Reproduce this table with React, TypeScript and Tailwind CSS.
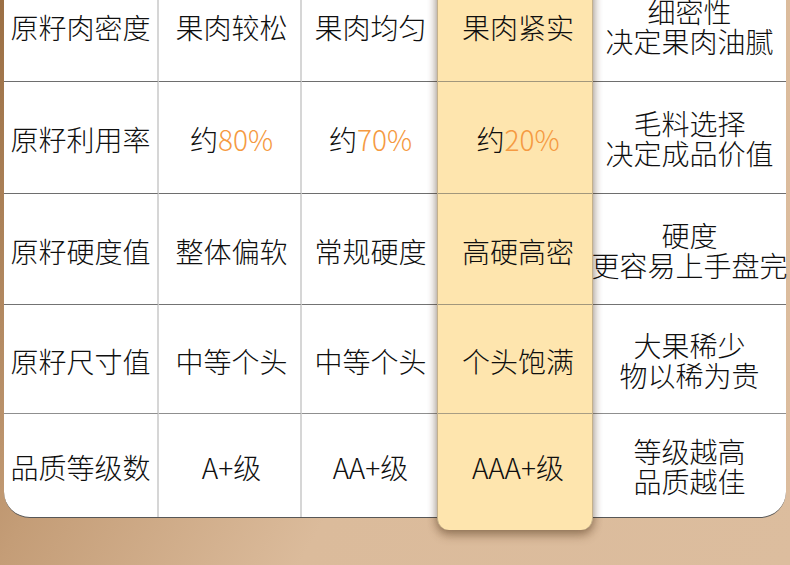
import React from "react";

type Row = {
  label: string;
  a: React.ReactNode;
  b: React.ReactNode;
  c: React.ReactNode;
  d: string[];
  h: string;
  line: string;
  hline: string;
};

const Pct = ({ v }: { v: string }) => (
  <span>
    约<span className="text-[#f59a42]">{v}</span>
  </span>
);

const rows: Row[] = [
  { label: "原籽肉密度", a: "果肉较松", b: "果肉均匀", c: "果肉紧实", d: ["细密性", "决定果肉油腻"], h: "h-[112px]", line: "border-b border-[#6e6e6e]", hline: "border-b border-[#a2977c]" },
  { label: "原籽利用率", a: <Pct v="80%" />, b: <Pct v="70%" />, c: <Pct v="20%" />, d: ["毛料选择", "决定成品价值"], h: "h-[112px]", line: "border-b border-[#6e6e6e]", hline: "border-b border-[#a2977c]" },
  { label: "原籽硬度值", a: "整体偏软", b: "常规硬度", c: "高硬高密", d: ["硬度", "更容易上手盘完"], h: "h-[111px]", line: "border-b border-[#737373]", hline: "border-b border-[#a2977c]" },
  { label: "原籽尺寸值", a: "中等个头", b: "中等个头", c: "个头饱满", d: ["大果稀少", "物以稀为贵"], h: "h-[109px]", line: "border-b border-[#8f8f8f]", hline: "border-b border-[#a89d84]" },
  { label: "品质等级数", a: "A+级", b: "AA+级", c: "AAA+级", d: ["等级越高", "品质越佳"], h: "h-[103px]", line: "", hline: "" },
];

export default function App() {
  return (
    <div className="h-[565px] w-[790px] overflow-hidden bg-[linear-gradient(120deg,#9b6f44_0%,#c49d77_29%,#dbbb9b_56%,#dcbd9e_100%)] font-['Noto_Sans_CJK_SC','Noto_Sans',sans-serif] text-[28px] leading-[30px] font-light text-[#0f0f0f]">
      <div className="-mt-[30px] ml-[4px] flex h-[548px] w-[782px] items-start rounded-b-[26px] border-b border-[#575757] bg-white">
        {/* column 1 */}
        <div className="flex w-[155px] flex-col">
          {rows.map((r, i) => (
            <div key={i} className={`flex items-center justify-center border-r-2 border-r-[#d6d6d6] pt-[3px] ${r.h} ${r.line}`}>
              {r.label}
            </div>
          ))}
        </div>
        {/* column 2 */}
        <div className="flex w-[143px] flex-col">
          {rows.map((r, i) => (
            <div key={i} className={`flex items-center justify-center border-r-2 border-r-[#d6d6d6] pt-[3px] pl-[4px] ${r.h} ${r.line}`}>
              {r.a}
            </div>
          ))}
        </div>
        {/* column 3 */}
        <div className="flex w-[135px] flex-col">
          {rows.map((r, i) => (
            <div key={i} className={`flex items-center justify-center pt-[3px] pl-[2px] ${r.h} ${r.line}`}>
              {r.b}
            </div>
          ))}
        </div>
        {/* highlighted column */}
        <div className="relative z-10 flex h-[560px] w-[156px] flex-col rounded-b-[12px] border-x border-[#c4b18b] bg-[#fee5ae] shadow-[0_0_10px_rgba(60,40,20,0.35),0_6px_10px_rgba(80,50,20,0.35)]">
          {rows.map((r, i) => (
            <div key={i} className={`flex items-center justify-center pt-[3px] pl-[6px] ${r.h} ${r.hline}`}>
              {r.c}
            </div>
          ))}
        </div>
        {/* column 5 */}
        <div className="flex w-[193px] flex-col">
          {rows.map((r, i) => (
            <div key={i} className={`flex flex-col items-center justify-center whitespace-nowrap pt-[1px] ${r.h} ${r.line}`}>
              {r.d.map((t, j) => (
                <span key={j}>{t}</span>
              ))}
            </div>
          ))}
        </div>
      </div>
    </div>
  );
}
